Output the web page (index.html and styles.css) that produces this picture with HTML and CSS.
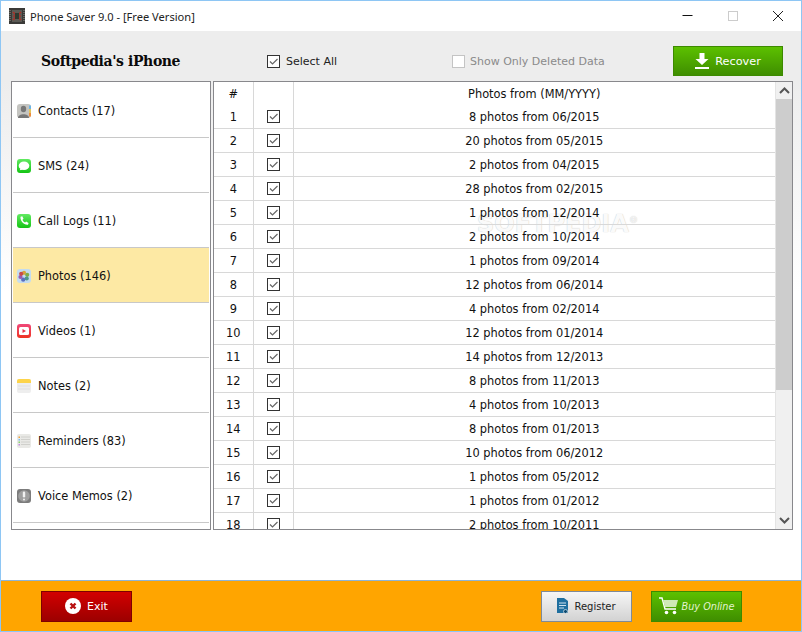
FILE: index.html
```html
<!DOCTYPE html>
<html lang="en">
<head>
<meta charset="utf-8">
<title>Phone Saver 9.0</title>
<link rel="stylesheet" href="styles.css">
</head>
<body>
<div class="window">
  <header class="titlebar">
    <svg class="app-icon" width="16" height="16" viewBox="0 0 16 16"><rect width="16" height="16" fill="#3a3a38"/><rect x="3" y="2" width="10" height="12" fill="#5b5b55"/><path d="M4 4l8 8M12 4l-8 8M4 8h8" stroke="#a8322a" stroke-width="1.6"/><rect x="6" y="5" width="4" height="6" fill="#2c3a30"/><path d="M1 2v12M15 2v12" stroke="#9a9a90" stroke-width="1" stroke-dasharray="1 1"/></svg>
    <span class="title">Phone Saver 9.0 - [Free Version]</span>
    <div class="win-controls">
      <svg width="12" height="12" viewBox="0 0 12 12"><path d="M0.500 5.500h10" stroke="#111" stroke-width="1"/></svg>
      <svg width="12" height="12" viewBox="0 0 12 12"><rect x="1.500" y="1.500" width="9" height="9" fill="none" stroke="#ccc"/></svg>
      <svg width="12" height="12" viewBox="0 0 12 12"><path d="M1 1l10 10M11 1L1 11" stroke="#222" stroke-width="1"/></svg>
    </div>
  </header>

  <div class="body-area">
  <section class="toolbar">
    <h1 class="device">Softpedia's iPhone</h1>
    <label class="opt opt-all"><span class="check"><svg viewBox="0 0 11 11"><path d="M2 5.500l2.500 2.500L9.500 3" fill="none" stroke="#666" stroke-width="1.200"/></svg></span>Select All</label>
    <label class="opt opt-deleted"><span class="check check-off"></span>Show Only Deleted Data</label>
    <button class="btn btn-green btn-recover">
      <svg width="14" height="16" viewBox="0 0 14 16"><path d="M4.500 0h5v6h4l-6.500 6L0.500 6h4z" fill="#fff"/><rect x="0" y="14" width="14" height="2" fill="#fff"/></svg>Recover</button>
  </section>

  <main class="content">
    <nav class="sidebar">
      <div class="cat"><svg class="ic" viewBox="0 0 14 14"><rect width="14" height="14" rx="3" fill="#c4c4c0"/><rect x="12" y="1.500" width="2" height="3.500" fill="#6cb4e4"/><rect x="12" y="5" width="2" height="4" fill="#e4c45c"/><rect x="12" y="9" width="2" height="3.500" fill="#ee8c3c"/><ellipse cx="6.500" cy="5" rx="2.700" ry="3.300" fill="#777"/><path d="M1 14c0-5 11-5 11 0z" fill="#777"/></svg>Contacts (17)</div>
      <div class="cat"><svg class="ic" viewBox="0 0 14 14"><defs><linearGradient id="grn" x1="0" y1="0" x2="0" y2="1"><stop offset="0" stop-color="#62ea62"/><stop offset="1" stop-color="#14c414"/></linearGradient></defs><rect width="14" height="14" rx="3" fill="url(#grn)"/><ellipse cx="7" cy="6.800" rx="5.300" ry="4.300" fill="#fff"/><path d="M3.500 9.500l-.8 1.800L6 10.500z" fill="#fff"/></svg>SMS (24)</div>
      <div class="cat"><svg class="ic" viewBox="0 0 14 14"><rect width="14" height="14" rx="3" fill="url(#grn)"/><path d="M3.500 2.800l1.800-.6 1.200 2.600-1 1c.5 1.300 1.300 2.200 2.600 2.800l1-1 2.500 1.300-.6 1.800c-4 .6-8-3.800-7.500-7.900z" fill="#fff"/></svg>Call Logs (11)</div>
      <div class="cat cat-active"><svg class="ic" viewBox="0 0 14 14"><rect width="14" height="14" rx="3" fill="#c4dcf0"/><circle cx="7" cy="3.800" r="2.100" fill="#d9a23a"/><circle cx="10.200" cy="5.800" r="2.100" fill="#7fae4a"/><circle cx="9.700" cy="9.500" r="2.100" fill="#4d9a8c"/><circle cx="6.200" cy="10.700" r="2.100" fill="#5a6fc0"/><circle cx="3.500" cy="8" r="2.100" fill="#9a5ab0"/><circle cx="4.200" cy="4.800" r="2.100" fill="#c84a4a"/></svg>Photos (146)</div>
      <div class="cat"><svg class="ic" viewBox="0 0 14 14"><defs><linearGradient id="vid" x1="0" y1="0" x2="0" y2="1"><stop offset="0" stop-color="#f0487a"/><stop offset="1" stop-color="#ee3322"/></linearGradient></defs><rect width="14" height="14" rx="3" fill="url(#vid)"/><rect x="2" y="3" width="10" height="8" rx="1.500" fill="#fff"/><path d="M5.500 5v4l3.500-2z" fill="#e8344a"/></svg>Videos (1)</div>
      <div class="cat"><svg class="ic" viewBox="0 0 14 14"><rect width="14" height="14" rx="2" fill="#eeeeee"/><path d="M0 4V2a2 2 0 0 1 2-2h10a2 2 0 0 1 2 2v2z" fill="#fdd44a"/><path d="M1 7h12M1 10h12" stroke="#e0e0e0"/></svg>Notes (2)</div>
      <div class="cat"><svg class="ic" viewBox="0 0 14 14"><rect width="14" height="14" rx="2" fill="#e9e9e6"/><path d="M4 3h9M4 5.500h9M4 8h9M4 10.500h9" stroke="#d0d0cc"/><path d="M1.500 2.500h1.500v1.500h-1.500z" fill="#f2a33a"/><path d="M1.500 5h1.500v1.500h-1.500z" fill="#7ac0ee"/><path d="M1.500 7.500h1.500v1.500h-1.500z" fill="#8ad070"/><path d="M1.500 10h1.500v1.500h-1.500z" fill="#c48be0"/></svg>Reminders (83)</div>
      <div class="cat"><svg class="ic" viewBox="0 0 14 14"><rect width="14" height="14" rx="3" fill="#7c7c7c"/><circle cx="7" cy="7" r="5.800" fill="#a0a0a0"/><rect x="5.800" y="2.500" width="2.400" height="6" rx="1.200" fill="#f2f2f2"/><circle cx="7" cy="10.500" r="1" fill="#f2f2f2"/></svg>Voice Memos (2)</div>
    </nav>

    <div class="grid-wrap">
      <div class="grid-scroll">
        <div class="watermark">SOFTPEDIA<sup>®</sup></div>
        <table class="grid">
          <thead><tr><th class="col-n">#</th><th class="col-c"></th><th>Photos from (MM/YYYY)</th></tr></thead>
          <tbody>
            <tr><td>1</td><td><span class="check"><svg viewBox="0 0 11 11"><path d="M2 5.500l2.500 2.500L9.500 3" fill="none" stroke="#666" stroke-width="1.200"/></svg></span></td><td>8 photos from 06/2015</td></tr>
            <tr><td>2</td><td><span class="check"><svg viewBox="0 0 11 11"><path d="M2 5.500l2.500 2.500L9.500 3" fill="none" stroke="#666" stroke-width="1.200"/></svg></span></td><td>20 photos from 05/2015</td></tr>
            <tr><td>3</td><td><span class="check"><svg viewBox="0 0 11 11"><path d="M2 5.500l2.500 2.500L9.500 3" fill="none" stroke="#666" stroke-width="1.200"/></svg></span></td><td>2 photos from 04/2015</td></tr>
            <tr><td>4</td><td><span class="check"><svg viewBox="0 0 11 11"><path d="M2 5.500l2.500 2.500L9.500 3" fill="none" stroke="#666" stroke-width="1.200"/></svg></span></td><td>28 photos from 02/2015</td></tr>
            <tr><td>5</td><td><span class="check"><svg viewBox="0 0 11 11"><path d="M2 5.500l2.500 2.500L9.500 3" fill="none" stroke="#666" stroke-width="1.200"/></svg></span></td><td>1 photos from 12/2014</td></tr>
            <tr><td>6</td><td><span class="check"><svg viewBox="0 0 11 11"><path d="M2 5.500l2.500 2.500L9.500 3" fill="none" stroke="#666" stroke-width="1.200"/></svg></span></td><td>2 photos from 10/2014</td></tr>
            <tr><td>7</td><td><span class="check"><svg viewBox="0 0 11 11"><path d="M2 5.500l2.500 2.500L9.500 3" fill="none" stroke="#666" stroke-width="1.200"/></svg></span></td><td>1 photos from 09/2014</td></tr>
            <tr><td>8</td><td><span class="check"><svg viewBox="0 0 11 11"><path d="M2 5.500l2.500 2.500L9.500 3" fill="none" stroke="#666" stroke-width="1.200"/></svg></span></td><td>12 photos from 06/2014</td></tr>
            <tr><td>9</td><td><span class="check"><svg viewBox="0 0 11 11"><path d="M2 5.500l2.500 2.500L9.500 3" fill="none" stroke="#666" stroke-width="1.200"/></svg></span></td><td>4 photos from 02/2014</td></tr>
            <tr><td>10</td><td><span class="check"><svg viewBox="0 0 11 11"><path d="M2 5.500l2.500 2.500L9.500 3" fill="none" stroke="#666" stroke-width="1.200"/></svg></span></td><td>12 photos from 01/2014</td></tr>
            <tr><td>11</td><td><span class="check"><svg viewBox="0 0 11 11"><path d="M2 5.500l2.500 2.500L9.500 3" fill="none" stroke="#666" stroke-width="1.200"/></svg></span></td><td>14 photos from 12/2013</td></tr>
            <tr><td>12</td><td><span class="check"><svg viewBox="0 0 11 11"><path d="M2 5.500l2.500 2.500L9.500 3" fill="none" stroke="#666" stroke-width="1.200"/></svg></span></td><td>8 photos from 11/2013</td></tr>
            <tr><td>13</td><td><span class="check"><svg viewBox="0 0 11 11"><path d="M2 5.500l2.500 2.500L9.500 3" fill="none" stroke="#666" stroke-width="1.200"/></svg></span></td><td>4 photos from 10/2013</td></tr>
            <tr><td>14</td><td><span class="check"><svg viewBox="0 0 11 11"><path d="M2 5.500l2.500 2.500L9.500 3" fill="none" stroke="#666" stroke-width="1.200"/></svg></span></td><td>8 photos from 01/2013</td></tr>
            <tr><td>15</td><td><span class="check"><svg viewBox="0 0 11 11"><path d="M2 5.500l2.500 2.500L9.500 3" fill="none" stroke="#666" stroke-width="1.200"/></svg></span></td><td>10 photos from 06/2012</td></tr>
            <tr><td>16</td><td><span class="check"><svg viewBox="0 0 11 11"><path d="M2 5.500l2.500 2.500L9.500 3" fill="none" stroke="#666" stroke-width="1.200"/></svg></span></td><td>1 photos from 05/2012</td></tr>
            <tr><td>17</td><td><span class="check"><svg viewBox="0 0 11 11"><path d="M2 5.500l2.500 2.500L9.500 3" fill="none" stroke="#666" stroke-width="1.200"/></svg></span></td><td>1 photos from 01/2012</td></tr>
            <tr><td>18</td><td><span class="check"><svg viewBox="0 0 11 11"><path d="M2 5.500l2.500 2.500L9.500 3" fill="none" stroke="#666" stroke-width="1.200"/></svg></span></td><td>2 photos from 10/2011</td></tr>
          </tbody>
        </table>
      </div>
      <div class="scrollbar">
        <div class="sb-btn"><svg width="11" height="7" viewBox="0 0 11 7"><path d="M1 6l4.500-4.500L10 6" fill="none" stroke="#555" stroke-width="2"/></svg></div>
        <div class="sb-track"><div class="sb-thumb"></div></div>
        <div class="sb-btn"><svg width="11" height="7" viewBox="0 0 11 7"><path d="M1 1l4.500 4.500L10 1" fill="none" stroke="#555" stroke-width="2"/></svg></div>
      </div>
    </div>
  </main>
  </div>

  <footer class="footer">
    <button class="btn btn-red"><svg width="16" height="16" viewBox="0 0 16 16"><circle cx="8" cy="8" r="8" fill="#fff"/><path d="M5.500 5.500l5 5M10.500 5.500l-5 5" stroke="#b80f0f" stroke-width="2.400"/></svg>Exit</button>
    <button class="btn btn-grey"><svg width="11" height="16" viewBox="0 0 11 16"><path d="M0 0h7l4 3v12H0z" fill="#1f6f9f"/><path d="M2 5h7M2 7.500h7M2 10h5" stroke="#cfe3ef"/><circle cx="8.500" cy="13.500" r="2" fill="#0d4a70" stroke="#fff" stroke-width=".6"/></svg>Register</button>
    <button class="btn btn-green btn-buy"><svg width="20" height="18" viewBox="0 0 20 18"><path d="M0 1h3l3 11h11" fill="none" stroke="#fff" stroke-width="1.400"/><path d="M4 3h15l-2 7H6z" fill="#cfe9b6"/><circle cx="7.500" cy="15.500" r="1.800" fill="#fff"/><circle cx="15.500" cy="15.500" r="1.800" fill="#fff"/></svg>Buy Online</button>
  </footer>
</div>
</body>
</html>
```
FILE: styles.css
```css
* { box-sizing: border-box; }
html, body { margin: 0; padding: 0; }
body {
  width: 802px; height: 632px; overflow: hidden;
  font-family: "DejaVu Sans", sans-serif;
  font-size: 11px; color: #111;
}
.window {
  width: 802px; height: 632px;
  border: 1px solid #8ec6f4;
  display: flex; flex-direction: column;
  background: #fff;
}
.titlebar {
  height: 30px; flex: none;
  display: flex; align-items: center;
  padding-left: 8px;
  background: #fff;
}
.app-icon { flex: none; }
.title { margin-left: 5px; font: 11.100px "Noto Sans", sans-serif; color: #222; }
.win-controls {
  margin-left: auto;
  display: flex; gap: 33px;
  padding-right: 17px;
}
.body-area {
  flex: 1;
  background: linear-gradient(#ededed, #ededed 50px, #ffffff 260px);
}
.toolbar {
  height: 50px;
  display: flex; align-items: center;
  padding-top: 10px;
}
.device {
  margin: 0 0 0 40px; width: 226px;
  font: bold 14px "DejaVu Serif", serif;
  letter-spacing: -0.4px;
  color: #0a0a0a;
}
.opt { display: flex; align-items: center; gap: 6px; font-size: 11px; }
.opt-all { width: 185px; color: #222; }
.opt-deleted { width: 221px; color: #8a8a8a; gap: 5px; }
.check {
  display: inline-block; width: 13px; height: 13px;
  border: 1px solid #333; background: #fff; flex: none;
}
.check svg { display: block; width: 11px; height: 11px; }
.check-off { border-color: #c4c4c4; }
.btn {
  display: flex; align-items: center; justify-content: center; gap: 6px;
  font-family: inherit; font-size: 11px;
  padding: 0; border: 1px solid; cursor: default;
}
.btn-green {
  background: linear-gradient(#5cc000, #3f8e00);
  border-color: #3d8a00; color: #fff;
}
.btn-recover { width: 110px; height: 30px; font-size: 11.300px; }
.content {
  height: 449px;
  display: flex; gap: 2px;
  padding-left: 10px;
}
.sidebar {
  width: 200px; height: 449px;
  border: 1px solid #88888c;
  padding: 1px 1px 0;
  display: flex; flex-direction: column;
  background: #fff;
}
.cat {
  height: 55px; flex: none;
  display: flex; align-items: center; gap: 7px;
  padding-left: 4px; padding-top: 1px;
  border-bottom: 1px solid #c8c8c8;
  font-size: 11.400px;
}
.cat-active { background: #fde9a4; }
.ic { width: 14px; height: 14px; flex: none; }
.grid-wrap {
  width: 580px; height: 449px;
  border: 1px solid #88888c;
  display: flex;
  background: #fff;
}
.grid-scroll { flex: 1; overflow: hidden; position: relative; }
.grid { position: relative; width: 100%; border-collapse: collapse; table-layout: fixed; }
.grid th, .grid td {
  height: 24px; padding: 0; text-align: center;
  font-weight: normal; font-size: 11.400px;
  border-right: 1px solid #d8d8d8;
  border-bottom: 1px solid #d8d8d8;
}
.grid th { height: 22px; border-bottom: 0; padding-top: 2px; }
.grid td:first-child, .grid td:last-child { padding-top: 2px; }
.grid td:last-child, .grid th:last-child { border-right: 0; }
.col-n { width: 39px; }
.col-c { width: 40px; }
.grid .check { vertical-align: middle; }
.watermark {
  position: absolute; left: 263px; top: 128px;
  font: bold 24px "DejaVu Sans", sans-serif;
  color: #fafafa;
  text-shadow: 0 0 1px rgba(170,170,170,.8);
}
.watermark sup { font-size: 9px; }
.scrollbar {
  width: 17px; flex: none;
  display: flex; flex-direction: column;
  background: #f0f0f0;
  border-left: 1px solid #e4e4e4;
}
.sb-btn { height: 17px; flex: none; display: flex; align-items: center; justify-content: center; }
.sb-track { flex: 1; }
.sb-thumb { height: 291px; background: #cdcdcd; }
.footer {
  height: 51px; flex: none;
  border-top: 1px solid #8fb4d4;
  background: #ffa500;
  display: flex; align-items: center;
  padding-left: 40px;
}
.footer .btn { width: 91px; height: 31px; }
.btn-red {
  background: linear-gradient(#d20000, #9c0000);
  border-color: #7e0000; color: #fff;
}
.btn-grey {
  margin-left: 409px; font-size: 10px;
  background: linear-gradient(#f6f6f6, #d2d2d2);
  border-color: #7f8a98; color: #222;
}
.btn-buy { margin-left: 19px; font-style: italic; gap: 3px; font-size: 9.700px; color: #e4f5d0; }
```
